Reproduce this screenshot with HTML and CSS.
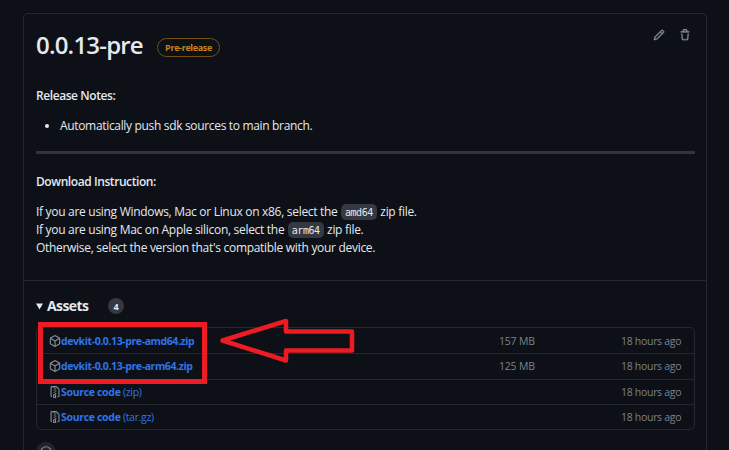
FILE: index.html
```html
<!DOCTYPE html>
<html lang="en">
<head>
<meta charset="utf-8">
<title>0.0.13-pre</title>
<link rel="stylesheet" href="styles.css">
</head>
<body>
<svg class="defs" aria-hidden="true">
  <symbol id="package" viewBox="0 0 16 16"><path d="m8.878.392 5.25 3.045c.54.314.872.89.872 1.514v6.098a1.75 1.75 0 0 1-.872 1.514l-5.25 3.045a1.75 1.75 0 0 1-1.756 0l-5.25-3.045A1.75 1.75 0 0 1 1 11.049V4.951c0-.624.332-1.201.872-1.514L7.122.392a1.75 1.75 0 0 1 1.756 0ZM7.875 1.69l-4.63 2.685L8 7.133l4.755-2.758-4.63-2.685a.248.248 0 0 0-.25 0ZM2.5 5.677v5.372c0 .09.047.171.125.216l4.625 2.683V8.432Zm6.25 8.271 4.625-2.683a.25.25 0 0 0 .125-.216V5.677L8.75 8.432Z"/></symbol>
  <symbol id="file-zip" viewBox="0 0 16 16"><path d="M3.5 1.75v11.5c0 .09.048.173.126.217a.75.75 0 0 1-.752 1.298A1.748 1.748 0 0 1 2 13.25V1.75C2 .784 2.784 0 3.75 0h5.586c.464 0 .909.185 1.237.513l2.914 2.914c.329.328.513.773.513 1.237v8.586A1.75 1.75 0 0 1 12.25 15h-.5a.75.75 0 0 1 0-1.500h.5a.25.25 0 0 0 .25-.25V4.664a.25.25 0 0 0-.073-.177L9.513 1.573a.25.25 0 0 0-.177-.073H7.250a.75.75 0 0 1 0 1.500h-.5a.75.75 0 0 1 0-1.500h-3a.25.25 0 0 0-.25.25Zm3.750 8.750h.5c.966 0 1.750.784 1.750 1.750v3a.75.75 0 0 1-.75.75h-2.500a.75.75 0 0 1-.75-.75v-3c0-.966.784-1.750 1.750-1.750ZM6 5.250a.75.75 0 0 1 .75-.75h.5a.75.75 0 0 1 0 1.500h-.5A.75.75 0 0 1 6 5.250Zm.75 2.250h.5a.75.75 0 0 1 0 1.500h-.5a.75.75 0 0 1 0-1.500ZM8 6.750A.75.75 0 0 1 8.750 6h.5a.75.75 0 0 1 0 1.500h-.5A.75.75 0 0 1 8 6.750ZM8.750 3h.5a.75.75 0 0 1 0 1.500h-.5a.75.75 0 0 1 0-1.500ZM8 9.750A.75.75 0 0 1 8.750 9h.5a.75.75 0 0 1 0 1.500h-.5A.75.75 0 0 1 8 9.750Zm-1 2.500v2.250h1v-2.250a.25.25 0 0 0-.25-.25h-.5a.25.25 0 0 0-.25.25Z"/></symbol>
</svg>
<main class="card">
  <section class="release">
    <header class="head">
      <h1 class="title">0.0.13-pre</h1>
      <span class="label">Pre-release</span>
      <div class="actions">
        <svg class="action" viewBox="0 0 16 16"><path d="M11.013 1.427a1.75 1.75 0 0 1 2.474 0l1.086 1.086a1.75 1.75 0 0 1 0 2.474l-8.610 8.610c-.21.21-.47.364-.756.445l-3.251.93a.75.75 0 0 1-.927-.928l.929-3.250c.081-.286.235-.547.445-.758l8.610-8.610Zm.176 4.823L9.750 4.810l-6.286 6.287a.253.253 0 0 0-.064.108l-.558 1.953 1.953-.558a.253.253 0 0 0 .108-.064Zm1.238-3.763a.25.25 0 0 0-.354 0L10.811 3.750l1.439 1.440 1.263-1.263a.25.25 0 0 0 0-.354Z"/></svg>
        <svg class="action" viewBox="0 0 16 16"><path d="M11 1.750V3h2.250a.75.75 0 0 1 0 1.500H2.750a.75.75 0 0 1 0-1.500H5V1.750C5 .784 5.784 0 6.750 0h2.500C10.216 0 11 .784 11 1.750ZM4.496 6.675l.66 6.600a.25.25 0 0 0 .249.225h5.190a.25.25 0 0 0 .249-.225l.66-6.600a.75.75 0 0 1 1.492.149l-.66 6.600A1.748 1.748 0 0 1 10.595 15h-5.190a1.750 1.750 0 0 1-1.741-1.575l-.66-6.600a.75.75 0 1 1 1.492-.150ZM6.500 1.750V3h3V1.750a.25.25 0 0 0-.25-.25h-2.500a.25.25 0 0 0-.25.25Z"/></svg>
      </div>
    </header>
    <p class="strong notes">Release Notes:</p>
    <ul class="list"><li>Automatically push sdk sources to main branch.</li></ul>
    <hr class="rule">
    <p class="strong instr">Download Instruction:</p>
    <p class="text">If you are using Windows, Mac or Linux on x86, select the <code>amd64</code> zip file.<br>If you are using Mac on Apple silicon, select the <code>arm64</code> zip file.<br>Otherwise, select the version that's compatible with your device.</p>
  </section>
  <section class="assets">
    <h2 class="assets-head"><svg class="caret" viewBox="0 0 7 7"><path d="M0 .5h7L3.500 6.500z"/></svg><span class="assets-name">Assets</span><span class="count">4</span></h2>
    <div class="table">
      <div class="row"><svg class="icon"><use href="#package"/></svg><a class="file">devkit-0.0.13-pre-amd64.zip</a><span class="size">157 MB</span><span class="time">18 hours ago</span></div>
      <div class="row"><svg class="icon"><use href="#package"/></svg><a class="file">devkit-0.0.13-pre-arm64.zip</a><span class="size">125 MB</span><span class="time">18 hours ago</span></div>
      <div class="row"><svg class="icon"><use href="#file-zip"/></svg><a class="file source">Source code <span class="ext">(zip)</span></a><span class="time">18 hours ago</span></div>
      <div class="row"><svg class="icon"><use href="#file-zip"/></svg><a class="file source">Source code <span class="ext">(tar.gz)</span></a><span class="time">18 hours ago</span></div>
    </div>
    <div class="react"><svg viewBox="0 0 16 16"><circle cx="8" cy="8" r="7"/></svg></div>
  </section>
</main>
<div class="highlight"></div>
<svg class="arrow" viewBox="0 0 135 46"><path d="M2.500 22.500 66 3V13.500H132V32.500H66V42.500Z"/></svg>
</body>
</html>
```

FILE: styles.css
```css
* { box-sizing: border-box; }
body {
  margin: 0;
  height: 450px;
  padding-top: 13px;
  overflow: hidden;
  position: relative;
  background: #0d1017;
  color: #e3e9ef;
  font: 12px/18px "Open Sans", "Noto Sans", sans-serif;
}
h1, h2, p, ul { margin: 0; }
.defs { display: none; }
.card {
  width: 684px;
  height: 437px;
  margin-left: 23px;
  overflow: hidden;
  border: 1px solid #25292f;
  border-bottom: 0;
  border-radius: 5px 5px 0 0;
}
.release { height: 267px; padding: 13px 11px 0 12px; border-bottom: 1px solid #25292f; }
.head { display: flex; height: 36px; }
.title { width: 121px; font-size: 24px; line-height: 36px; font-weight: 600; letter-spacing: -.8px; white-space: nowrap; }
.label {
  width: 63px;
  height: 19px;
  margin-top: 11px;
  border: 1px solid #77500f;
  border-radius: 10px;
  color: #c4851b;
  font-size: 9px;
  line-height: 17px;
  font-weight: 700;
  letter-spacing: -.35px;
  text-align: center;
}
.actions { display: flex; gap: 14px; margin: 2px 4px 0 auto; }
.action { width: 12px; height: 12px; fill: #858d96; stroke: #858d96; stroke-width: .3; }
.strong { font-weight: 600; letter-spacing: -.42px; }
.notes { margin-top: 24px; }
.list { margin-top: 12px; padding-left: 24px; letter-spacing: -.33px; }
.rule { height: 3px; margin: 16px 0 0; border: 0; background: #30353c; }
.instr { margin-top: 19px; }
.text { margin-top: 12px; letter-spacing: -.3px; white-space: nowrap; }
code {
  padding: 3px 4px 2px;
  margin: 0 .5px;
  border-radius: 5px;
  background: #343941;
  font: 10px "DejaVu Sans Mono", monospace;
  letter-spacing: -.4px;
}
.assets { padding: 16px 11px 0 12px; }
.assets-head { display: flex; align-items: center; height: 18px; font-size: 14px; line-height: 18px; font-weight: 700; }
.caret { width: 7px; height: 7px; margin-right: 4px; fill: #e3e9ef; }
.assets-name { width: 61px; letter-spacing: -.6px; }
.count { width: 16px; height: 16px; border-radius: 50%; background: #343941; font-size: 9px; line-height: 17px; text-align: center; }
.table { margin-top: 12px; border: 1px solid #25292f; border-radius: 5px; font-size: 10.500px; }
.row { display: flex; align-items: center; height: 25.250px; padding: 0 12px; }
.row + .row { border-top: 1px solid #25292f; }
.icon { width: 12px; height: 12px; fill: #858d96; flex: none; }
.file { color: #2f74e8; font-weight: 700; letter-spacing: -.4px; white-space: nowrap; }
.source { letter-spacing: -.32px; }
.ext { font-weight: 400; }
.size { width: 36px; margin-left: auto; color: #7b838d; letter-spacing: -.2px; white-space: nowrap; }
.size + .time { margin-left: 86px; }
.time { width: 61px; margin-left: auto; color: #7b838d; letter-spacing: -.3px; white-space: nowrap; }
.react { width: 20px; height: 20px; margin-top: 12px; padding: 4px; border-radius: 50%; background: #20252c; }
.react svg { display: block; width: 12px; height: 12px; fill: none; stroke: #858d96; stroke-width: 1.500; }
.highlight { position: absolute; left: 38px; top: 322px; width: 169px; height: 62px; border: 5px solid #ed1c24; }
.arrow { position: absolute; left: 220px; top: 318px; width: 135px; height: 46px; fill: none; stroke: #ed1c24; stroke-width: 4.500; stroke-linejoin: round; }
```
